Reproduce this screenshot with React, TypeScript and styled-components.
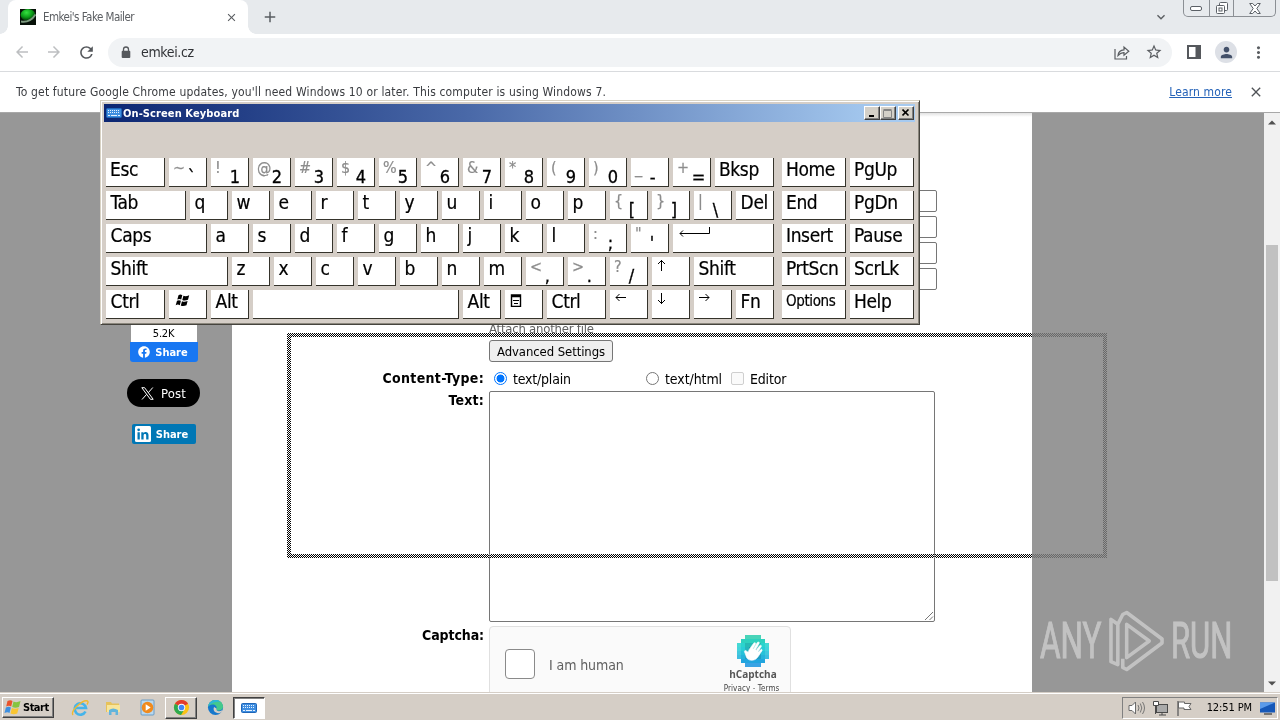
import React from 'react';
import styled, { createGlobalStyle, css } from 'styled-components';
import { MdArrowBack, MdArrowForward, MdRefresh, MdStarOutline, MdPerson, MdMoreVert, MdClose, MdAdd, MdKeyboardArrowDown } from 'react-icons/md';
import { FaFacebook } from 'react-icons/fa';

const Global = createGlobalStyle`
  * { box-sizing: border-box; }
  body { margin: 0; overflow: hidden; background: #fff; }
`;

const ui = `Tahoma, "DejaVu Sans Condensed", "DejaVu Sans", sans-serif`;

const Screen = styled.div`
  width: 1280px;
  height: 720px;
  display: flex;
  flex-direction: column;
  position: relative;
  overflow: hidden;
  font-family: ${ui};
  color: #000;
  svg { display: block; flex: none; }
`;

const Label = styled.span<{ $size: number; $track?: number; $color?: string; $bold?: boolean; $width?: number }>`
  font-size: ${(p) => p.$size}px;
  letter-spacing: ${(p) => p.$track ?? 0}px;
  color: ${(p) => p.$color ?? 'inherit'};
  font-weight: ${(p) => (p.$bold ? 700 : 400)};
  ${(p) => p.$width && css`width: ${p.$width}px;`}
  white-space: nowrap;
  flex: none;
`;

/* Browser frame */

const TabStrip = styled.header`
  height: 34px;
  flex: none;
  display: flex;
  background: #e7eaed;
`;

const Tab = styled.div`
  width: 240px;
  margin-left: 8px;
  height: 34px;
  background: #fff;
  border-radius: 8px 8px 0 0;
  display: flex;
  align-items: center;
  padding: 0 10px 0 12px;
  position: relative;
  &::before, &::after {
    content: "";
    position: absolute;
    bottom: 0;
    width: 8px;
    height: 8px;
  }
  &::before { left: -8px; background: radial-gradient(circle at 0 0, #e7eaed 7.5px, #fff 8px); }
  &::after { right: -8px; background: radial-gradient(circle at 100% 0, #e7eaed 7.5px, #fff 8px); }
`;

const TabTitle = styled(Label)`
  flex: 1;
  margin-left: 7px;
`;

const TabAction = styled.div<{ $left?: number; $right?: number }>`
  display: flex;
  align-items: center;
  color: #5a5d61;
  margin-left: ${(p) => p.$left ?? 0}px;
  margin-right: ${(p) => p.$right ?? 0}px;
`;

const Spacer = styled.div`
  flex: 1;
`;

const WindowControls = styled.div`
  width: 93px;
  height: 17px;
  margin-right: 4px;
  border: 1px solid #8b8f94;
  border-top: 0;
  border-radius: 0 0 5px 5px;
  display: flex;
`;

const WindowControl = styled.div<{ $width: number }>`
  width: ${(p) => p.$width}px;
  display: flex;
  align-items: center;
  justify-content: center;
  & + & { border-left: 1px solid #8b8f94; }
`;

const Toolbar = styled.div`
  height: 38px;
  flex: none;
  display: flex;
  align-items: center;
  background: #fff;
  border-bottom: 1px solid #d9dbde;
  padding: 0 0 1px 13px;
  color: #5a5d61;
`;

const NavButton = styled.div<{ $dim?: boolean }>`
  width: 32px;
  color: ${(p) => (p.$dim ? '#bdbfc1' : '#55585c')};
`;

const Omnibox = styled.div`
  width: 1064px;
  height: 29px;
  margin: 0 12px 0 -1px;
  border-radius: 15px;
  background: #f1f3f5;
  display: flex;
  align-items: center;
  padding: 0 9px 0 13px;
`;

const Address = styled(Label)`
  margin-left: 10px;
`;

const Avatar = styled.div`
  width: 22px;
  height: 22px;
  margin: 0 12px 0 13px;
  border-radius: 50%;
  background: #dde0e6;
  color: #44516a;
  display: flex;
  align-items: center;
  justify-content: center;
`;

const InfoBar = styled.div`
  height: 41px;
  flex: none;
  display: flex;
  align-items: center;
  padding: 0 16px;
  background: #fff;
  border-bottom: 1px solid #a8a8a8;
`;

const LearnMore = styled(Label)`
  text-decoration: underline;
  text-underline-offset: 1px;
  margin-right: 16px;
`;

/* Page */

const Viewport = styled.main`
  height: 579px;
  flex: none;
  display: flex;
  background: #979797;
  overflow: hidden;
`;

const ShareColumn = styled.aside`
  width: 73px;
  margin: 195px 32px 0 127px;
  display: flex;
  flex-direction: column;
  align-items: center;
`;

const ShareCount = styled.div`
  width: 66px;
  height: 34px;
  background: #fff;
  display: flex;
  justify-content: center;
  align-items: flex-end;
  padding-bottom: 2px;
`;

const ShareButton = styled.div<{ $w: number; $h: number; $bg: string; $radius: string; $top?: number; $gap: number; $pull?: number }>`
  width: ${(p) => p.$w}px;
  height: ${(p) => p.$h}px;
  margin-top: ${(p) => p.$top ?? 0}px;
  padding-right: ${(p) => p.$pull ?? 0}px;
  background: ${(p) => p.$bg};
  border-radius: ${(p) => p.$radius};
  color: #fff;
  display: flex;
  align-items: center;
  justify-content: center;
  gap: ${(p) => p.$gap}px;
`;

const Sheet = styled.section`
  width: 800px;
  background: linear-gradient(#e2e2e2, #fff 4px);
  padding: 77px 0 0;
  display: flex;
  flex-direction: column;
`;

const FormRow = styled.div<{ $height: number; $gap?: number }>`
  height: ${(p) => p.$height}px;
  flex: none;
  margin-bottom: ${(p) => p.$gap ?? 4}px;
  display: grid;
  grid-template-columns: 252px 1fr;
  column-gap: 5px;
`;

const FieldName = styled(Label)<{ $line?: number }>`
  justify-self: end;
  line-height: ${(p) => p.$line ?? 18}px;
`;

const TextInput = styled.div`
  grid-column: 2;
  width: 448px;
  height: 22px;
  border: 1px solid #767676;
  border-radius: 2px;
`;

const AttachLink = styled(Label)`
  grid-column: 2;
  line-height: 17px;
`;

const PushButton = styled.div`
  grid-column: 2;
  width: 124px;
  height: 22px;
  border: 1px solid #767676;
  border-radius: 3px;
  background: #efefef;
  display: flex;
  align-items: center;
  justify-content: center;
`;

const Options = styled.div`
  display: flex;
  align-items: center;
  padding-left: 5px;
`;

const OptionText = styled(Label)`
  padding-top: 2px;
`;

const Radio = styled.div<{ $on?: boolean }>`
  width: 13px;
  height: 13px;
  border-radius: 50%;
  border: 1px solid ${(p) => (p.$on ? '#0075ff' : '#767676')};
  margin-right: 6px;
  ${(p) => p.$on && css`background: radial-gradient(circle, #0075ff 0 3.6px, #fff 4.3px);`}
`;

const Check = styled.div`
  width: 13px;
  height: 13px;
  border: 1px solid #cfcfcf;
  border-radius: 2px;
  background: #fafafa;
  margin: 0 6px 0 9px;
`;

const TextArea = styled.div`
  width: 446px;
  height: 231px;
  border: 1px solid #767676;
  border-radius: 2px;
  display: flex;
  align-items: flex-end;
  justify-content: flex-end;
`;

const Captcha = styled.div`
  width: 302px;
  height: 76px;
  border: 1px solid #e0e0e0;
  border-radius: 4px;
  background: #fafafa;
  display: flex;
  align-items: center;
  padding: 0 7px 0 15px;
`;

const CaptchaBox = styled.div`
  width: 30px;
  height: 30px;
  border: 1px solid #8a8a8a;
  border-radius: 4px;
  background: #fff;
  margin-right: 14px;
`;

const CaptchaText = styled(Label)`
  padding-top: 2px;
`;

const CaptchaBrand = styled.div`
  align-self: stretch;
  width: 60px;
  padding-top: 8px;
  display: flex;
  flex-direction: column;
  align-items: center;
`;

const BrandName = styled(Label)`
  font-family: "Open Sans", sans-serif;
  line-height: 12px;
  margin-top: 1px;
`;

const BrandLinks = styled(Label)`
  line-height: 10px;
  margin: 4px 3px 0 0;
`;

const Scrollbar = styled.div`
  width: 16px;
  margin-left: auto;
  background: #f1f1f1;
  display: flex;
  flex-direction: column;
  align-items: center;
  justify-content: space-between;
  padding: 7px 0 6px;
`;

const Thumb = styled.div`
  width: 12px;
  height: 336px;
  margin-top: 19px;
  background: #c1c1c1;
`;

/* On-screen keyboard window */

const KeyboardWindow = styled.section`
  position: absolute;
  left: 100px;
  top: 100px;
  width: 820px;
  height: 225px;
  background: #d5cec7;
  border: 1px solid;
  border-color: #d8d2c4 #46443e #46443e #d8d2c4;
  box-shadow: inset 1px 1px #fff, inset -1px -1px #8b877d;
  padding: 3px 4px 0 3px;
`;

const TitleBar = styled.div`
  height: 18px;
  display: flex;
  align-items: center;
  padding: 0 1px 0 2px;
  background: linear-gradient(90deg, #0c2672, #4a69a8 45%, #a6caf0 96%);
`;

const TitleText = styled(Label)`
  flex: 1;
  margin-left: 1px;
`;

const CaptionButton = styled.div<{ $gap?: number }>`
  width: 16px;
  height: 14px;
  margin-left: ${(p) => p.$gap ?? 0}px;
  background: #d4d0c8;
  border: 1px solid;
  border-color: #fff #404040 #404040 #fff;
  box-shadow: inset -1px -1px #808080;
  display: flex;
  align-items: center;
  justify-content: center;
`;

const KeyArea = styled.div`
  display: flex;
  gap: 8px;
  padding: 36px 0 0 2px;
`;

const KeyBlock = styled.div<{ $width: number }>`
  width: ${(p) => p.$width}px;
  display: flex;
  flex-direction: column;
  gap: 4px;
`;

const KeyRow = styled.div`
  display: flex;
  gap: 4px;
`;

const Key = styled.div<{ $width: number }>`
  width: ${(p) => p.$width}px;
  height: 29px;
  flex: none;
  background: #fff;
  border-right: 1px solid #35332b;
  border-bottom: 1px solid #35332b;
  display: flex;
  align-items: flex-start;
  padding-left: 4px;
  overflow: hidden;
`;

const KeyText = styled(Label)<{ $indent?: number }>`
  line-height: 22px;
  padding-left: ${(p) => p.$indent ?? 0}px;
  -webkit-text-stroke: 0.2px #000;
`;

const ShiftGlyph = styled.span`
  width: 14px;
  flex: none;
  font-size: 16px;
  line-height: 20px;
  color: #8c8c8c;
  -webkit-text-stroke: 0.2px #8c8c8c;
`;

const BaseGlyph = styled.span`
  font-size: 18px;
  line-height: 24px;
  margin: 7px 0 0 0.7px;
  flex: none;
  -webkit-text-stroke: 0.3px #000;
`;

const KeyIcon = styled.div<{ $top: number; $left: number }>`
  padding: ${(p) => p.$top}px 0 0 ${(p) => p.$left}px;
`;

/* Inverted dotted outline that follows a dragged window */
const DragOutline = styled.div`
  position: absolute;
  left: 287px;
  top: 333px;
  width: 820px;
  height: 225px;
  padding: 4px;
  background: repeating-conic-gradient(#fff 0 25%, #000 0 50%) 0 0 / 2px 2px;
  mix-blend-mode: difference;
  mask: linear-gradient(#000 0 0) content-box exclude, linear-gradient(#000 0 0);
`;

const Watermark = styled.div`
  position: absolute;
  left: 1040px;
  top: 608px;
  width: 193px;
  height: 66px;
  display: flex;
  align-items: center;
  justify-content: space-between;
  opacity: 0.42;
  color: #fff;
`;

const WatermarkWord = styled.span<{ $scale: number; $width: number }>`
  width: ${(p) => p.$width}px;
  font: 400 50px/64px Roboto, sans-serif;
  transform: scaleX(${(p) => p.$scale});
  transform-origin: left;
  -webkit-text-stroke: 1px #fff;
`;

/* Taskbar */

const Taskbar = styled.footer`
  height: 28px;
  flex: none;
  background: #d5cec6;
  border-top: 1px solid #d5cec6;
  box-shadow: inset 0 1px #fff;
  display: flex;
  align-items: center;
  padding: 2px 2px 0;
`;

const StartButton = styled.div`
  width: 52px;
  height: 21px;
  border: 1px solid;
  border-color: #fff #404040 #404040 #fff;
  box-shadow: inset -1px -1px #808080;
  display: flex;
  align-items: center;
  gap: 1px;
  margin-right: 9px;
`;

const TaskItem = styled.div<{ $frame?: 'raised' | 'pressed' }>`
  width: 32px;
  height: 22px;
  margin: 0 0.9px;
  display: flex;
  align-items: center;
  justify-content: center;
  border: 1px solid transparent;
  ${(p) => p.$frame === 'raised' && css`border-color: #fff #404040 #404040 #fff; box-shadow: inset -1px -1px #808080;`}
  ${(p) => p.$frame === 'pressed' && css`border-color: #404040 #fff #fff #404040; background: #fff; box-shadow: inset 1px 1px #808080;`}
`;

const Tray = styled.div`
  width: 156px;
  height: 22px;
  border: 1px solid;
  border-color: #808080 #fff #fff #808080;
  display: flex;
  align-items: center;
  gap: 7px;
  padding: 0 2px 0 5px;
`;

type KeySpec = { t?: string; s?: string; w?: number; size?: number; icon?: React.ReactNode };

const arrowPaths: Record<string, string> = {
  left: 'M1 5.5h10M4.5 2 1 5.5 4.5 9',
  right: 'M0 5.5h10M6.5 2 10 5.5 6.5 9',
  up: 'M5.5 0v11M2 4 5.5 .5 9 4',
  down: 'M5.5 0v11M2 7 5.5 10.5 9 7',
};

const Arrow = ({ dir }: { dir: string }) => (
  <KeyIcon $top={dir === 'left' || dir === 'right' ? 2 : 3} $left={dir === 'up' || dir === 'down' ? 0 : 1}>
    <svg width="12" height="12" viewBox="0 0 12 12" fill="none" stroke="#000" strokeWidth="1"><path d={arrowPaths[dir]} /></svg>
  </KeyIcon>
);

const EnterIcon = () => (
  <KeyIcon $top={3} $left={2}>
    <svg width="32" height="12" viewBox="0 0 32 12" fill="none" stroke="#000"><path d="M30.5 0v6.500H1M4 3.500 1 6.500l3 3" /></svg>
  </KeyIcon>
);

const WinKeyIcon = () => (
  <KeyIcon $top={4} $left={2}>
    <svg width="15" height="13" viewBox="0 0 15 13" fill="#000">
      <path d="M3.500 1.200Q5.500 0 7.300 1.200L6.200 5.500Q4.300 4.500 2.300 5.600ZM8.400 1.700Q10.500 2.800 14.200 1.300L13 5.800Q9.600 7.200 7.300 6ZM2 6.700Q4 5.600 5.900 6.700L4.800 11.200Q2.800 10 .7 11.200ZM7 7.200Q9.300 8.400 12.600 7L11.500 11.300Q8 12.800 5.800 11.500Z" />
    </svg>
  </KeyIcon>
);

const MenuKeyIcon = () => (
  <KeyIcon $top={4} $left={1}>
    <svg width="12" height="13" viewBox="0 0 12 13" fill="none" stroke="#000"><path d="M1.500 1h9v11.500h-9zM1 2.500h10" strokeWidth="1.400" /><path d="M3 6.500h6M4 9.500h4" /></svg>
  </KeyIcon>
);

const letters = (s: string): KeySpec[] => s.split('').map((t) => ({ t }));
const pairs = (list: string[]): KeySpec[] => list.map((p) => ({ s: p[0], t: p[1] }));

const mainRows: KeySpec[][] = [
  [{ t: 'Esc', w: 59 }, ...pairs(['~`', '!1', '@2', '#3', '$4', '%5', '^6', '&7', '*8', '(9', ')0', '_-', '+=']), { t: 'Bksp', w: 59 }],
  [{ t: 'Tab', w: 80 }, ...letters('qwertyuiop'), ...pairs(['{[', '}]', '|\\']), { t: 'Del' }],
  [{ t: 'Caps', w: 101 }, ...letters('asdfghjkl'), ...pairs([':;', '"\'']), { icon: <EnterIcon />, w: 101 }],
  [{ t: 'Shift', w: 122 }, ...letters('zxcvbnm'), ...pairs(['<,', '>.', '?/']), { icon: <Arrow dir="up" /> }, { t: 'Shift', w: 80 }],
  [
    { t: 'Ctrl', w: 59 }, { icon: <WinKeyIcon /> }, { t: 'Alt' }, { w: 206 }, { t: 'Alt' }, { icon: <MenuKeyIcon /> }, { t: 'Ctrl', w: 59 },
    { icon: <Arrow dir="left" /> }, { icon: <Arrow dir="down" /> }, { icon: <Arrow dir="right" /> }, { t: 'Fn' },
  ],
];

const sideRows: KeySpec[][] = [
  [{ t: 'Home' }, { t: 'PgUp' }],
  [{ t: 'End' }, { t: 'PgDn' }],
  [{ t: 'Insert' }, { t: 'Pause' }],
  [{ t: 'PrtScn' }, { t: 'ScrLk' }],
  [{ t: 'Options', size: 15 }, { t: 'Help' }],
];

const Keys = ({ rows, width, unit, indent }: { rows: KeySpec[][]; width: number; unit: number; indent: number }) => (
  <KeyBlock $width={width}>
    {rows.map((row, r) => (
      <KeyRow key={r}>
        {row.map((k, i) => (
          <Key key={i} $width={k.w ?? unit}>
            {k.icon}
            {k.s && <ShiftGlyph>{k.s}</ShiftGlyph>}
            {k.s && <BaseGlyph>{k.t}</BaseGlyph>}
            {!k.s && k.t && <KeyText $size={k.size ?? 19} $track={-0.38} $indent={r > 0 ? indent : 0}>{k.t}</KeyText>}
          </Key>
        ))}
      </KeyRow>
    ))}
  </KeyBlock>
);

const KeyboardGlyph = ({ w = 16, h = 10 }: { w?: number; h?: number }) => (
  <svg width={w} height={h} viewBox="0 0 16 10">
    <rect x=".5" y=".5" width="15" height="9" rx="1" fill="#3f8ee0" stroke="#1f66b8" />
    <path d="M2 2.500h12M2 4.500h12" stroke="#e6f2ff" strokeDasharray="1 1" />
    <path d="M2 7.500h2M5 7.500h6M12 7.500h2" stroke="#e6f2ff" />
  </svg>
);

const FlagLogo = () => (
  <svg width="19" height="17" viewBox="0 0 18 17">
    <path d="M4 2Q7 .5 9 2L7.700 7.500Q5.500 6 2.700 7.500Z" fill="#e9532b" />
    <path d="M10 2.500Q13 4 17 2L15.500 8Q12 9.500 8.700 8Z" fill="#86c440" />
    <path d="M2.400 8.500Q5.400 7 7.400 8.500L6 14Q4 12.500 1 14Z" fill="#3d8fe0" />
    <path d="M8.400 9Q11.500 10.500 15.200 9L13.700 14.500Q10 16 7 14.500Z" fill="#f9c531" />
  </svg>
);

const captchaCells: Array<[number, number]> = [];
for (let y = 0; y < 8; y++) {
  for (let x = 0; x < 8; x++) {
    const dx = Math.min(x, 7 - x);
    const dy = Math.min(y, 7 - y);
    if (dx + dy >= 2) captchaCells.push([x, y]);
  }
}

const CaptchaLogo = () => (
  <svg width="32" height="32" viewBox="0 0 32 32">
    {captchaCells.map(([x, y]) => (
      <rect key={`${x}-${y}`} x={x * 4} y={y * 4} width="4" height="4" fill={`hsl(${168 + y * 5}, ${62 + y * 2}%, ${56 - Math.min(x, 7 - x, y, 7 - y) * 6}%)`} />
    ))}
    <path d="M8 18c-1.500-2 .3-3.500 1.700-1.800l1.500 1 1-2.700 4.500-6.300c1-1.200 2.500-.3 1.800 1l-2.700 4.500.5.300 4-6.500c.9-1.200 2.500-.3 1.800 1.100l-3.500 6.200.6.400 3.400-4.500c1-1.200 2.300-.2 1.600 1l-3.200 5 .4.300 2.200-2.300c1-.9 2.100.1 1.300 1.200-2 2.600-3.500 6.100-5.900 8-3.500 2.400-7.500 1.700-9.500-1.300Z" fill="#fff" stroke="#fff" strokeWidth=".6" />
  </svg>
);

export default function App() {
  return (
    <Screen>
      <Global />
      <TabStrip>
        <Tab>
          <svg width="16" height="16" viewBox="0 0 16 16">
            <defs><radialGradient id="orb" cx=".4" cy=".3" r=".65"><stop offset="0" stopColor="#35e040" /><stop offset=".6" stopColor="#0b9a18" /><stop offset="1" stopColor="#033c08" /></radialGradient></defs>
            <rect width="16" height="16" fill="#071008" />
            <ellipse cx="8" cy="6" rx="7.500" ry="6" fill="url(#orb)" />
            <path d="M1 12.500Q10 14 15.500 5.500" stroke="#7d9a80" strokeWidth="1.800" fill="none" />
          </svg>
          <TabTitle $size={11.5} $track={-0.53} $color="#5a5d61">Emkei's Fake Mailer</TabTitle>
          <MdClose size={13} color="#5a5d61" />
        </Tab>
        <TabAction $left={13}><MdAdd size={18} /></TabAction>
        <Spacer />
        <TabAction $right={14}><MdKeyboardArrowDown size={16} /></TabAction>
        <WindowControls>
          <WindowControl $width={25}><svg width="13" height="6" viewBox="0 0 13 6"><rect x=".5" y="1.500" width="11" height="4" rx="1.500" fill="#fff" stroke="#5b6066" /></svg></WindowControl>
          <WindowControl $width={25}><svg width="14" height="14" viewBox="0 0 14 14" fill="#fff" stroke="#5b6066"><rect x="4.500" y="1.500" width="8" height="8" rx="1" /><rect x="1.500" y="4.500" width="8" height="8" rx="1" /><rect x="4" y="7" width="3" height="3" /></svg></WindowControl>
          <WindowControl $width={42}><svg width="12" height="11" viewBox="0 0 12 11" fill="#fff" stroke="#5b6066"><path d="M.7.5h3L6 3 8.300.5h3L7.800 5.500l3.500 5h-3L6 8 3.700 10.500h-3l3.500-5Z" /></svg></WindowControl>
        </WindowControls>
      </TabStrip>
      <Toolbar>
        <NavButton $dim><MdArrowBack size={18} /></NavButton>
        <NavButton $dim><MdArrowForward size={18} /></NavButton>
        <NavButton><MdRefresh size={19} /></NavButton>
        <Omnibox>
          <svg width="10" height="13" viewBox="0 0 10 13"><path d="M2.500 6V3.500a2.500 2.500 0 0 1 5 0V6" fill="none" stroke="#55585c" strokeWidth="1.300" /><rect x=".7" y="4.800" width="8.600" height="7.200" rx="1" fill="#55585c" /></svg>
          <Address $size={14} $track={-0.35} $color="#303236">emkei.cz</Address>
          <Spacer />
          <svg width="16" height="15" viewBox="0 0 16 15" fill="none" stroke="#5a5d61" strokeWidth="1.200"><path d="M1 4v10h11.500v-3" /><path d="M4 10.500Q4.500 5 10 4.800V2l4.800 4.200L10 10.300V7.600Q6.500 7.500 4 10.500Z" /></svg>
          <TabAction $left={15}><MdStarOutline size={18} /></TabAction>
        </Omnibox>
        <svg width="18" height="16" viewBox="0 0 18 16"><rect x="4" y="2" width="12" height="12" fill="none" stroke="#55585c" strokeWidth="2" /><rect x="11.500" y="1" width="5.500" height="14" fill="#55585c" /></svg>
        <Avatar><MdPerson size={17} /></Avatar>
        <MdMoreVert size={19} />
      </Toolbar>
      <InfoBar>
        <Label $size={12} $track={0.16} $color="#3a3c40">To get future Google Chrome updates, you'll need Windows 10 or later. This computer is using Windows 7.</Label>
        <Spacer />
        <LearnMore $size={12} $track={0.13} $color="#2462b8">Learn more</LearnMore>
        <MdClose size={16} color="#505357" />
      </InfoBar>

      <Viewport>
        <ShareColumn>
          <ShareCount><Label $size={11} $track={-0.2}>5.2K</Label></ShareCount>
          <ShareButton $w={68} $h={20} $bg="#1877f2" $radius="0 0 3px 3px" $gap={5} $pull={1}>
            <FaFacebook size={12} />
            <Label $size={11} $bold>Share</Label>
          </ShareButton>
          <ShareButton $w={73} $h={28} $bg="#000" $radius="14px" $top={17} $gap={7}>
            <svg width="13" height="13" viewBox="0 0 13 13" fill="none" stroke="#fff"><path d="M.8.7h2.800l8.600 11.600H9.400ZM11.800.5 7.200 5.800M5.700 7.300 1 12.500" /></svg>
            <Label $size={13} $track={0.2}>Post</Label>
          </ShareButton>
          <ShareButton $w={64} $h={20} $bg="#0077b5" $radius="2px" $top={17} $gap={5} $pull={4}>
            <svg width="16" height="16" viewBox="0 0 16 16"><rect width="16" height="16" rx="1.500" fill="#fff" /><path d="M2.500 6.200h2.300v7.300H2.500zM6.300 6.200h2.200v1c1.200-1.900 5-1.700 5 1.800v4.500h-2.300V9.400c0-2-2.600-1.800-2.600 0v4.100H6.300z" fill="#0077b5" /><circle cx="3.650" cy="3.800" r="1.350" fill="#0077b5" /></svg>
            <Label $size={11} $bold>Share</Label>
          </ShareButton>
        </ShareColumn>

        <Sheet>
          {[4, 4, 4, 30].map((gap, i) => (
            <FormRow key={i} $height={22} $gap={gap}><TextInput /></FormRow>
          ))}
          <FormRow $height={17} $gap={3}><AttachLink $size={13} $track={-0.22} $color="#606060">Attach another file</AttachLink></FormRow>
          <FormRow $height={22} $gap={4}><PushButton><Label $size={13} $track={-0.08}>Advanced Settings</Label></PushButton></FormRow>
          <FormRow $height={23} $gap={2}>
            <FieldName $size={14} $track={0.32} $line={24} $bold>Content-Type:</FieldName>
            <Options>
              <Radio $on /><OptionText $size={14} $track={-0.2} $width={133}>text/plain</OptionText>
              <Radio /><OptionText $size={14} $track={-0.08}>text/html</OptionText>
              <Check /><OptionText $size={14} $track={-0.2}>Editor</OptionText>
            </Options>
          </FormRow>
          <FormRow $height={231}>
            <FieldName $size={14} $track={0.2} $bold>Text:</FieldName>
            <TextArea><svg width="10" height="10" viewBox="0 0 10 10" stroke="#777"><path d="M1 9 9 1M5.500 9 9 5.500" /></svg></TextArea>
          </FormRow>
          <FormRow $height={76}>
            <FieldName $size={14} $track={-0.1} $bold>Captcha:</FieldName>
            <Captcha>
              <CaptchaBox />
              <CaptchaText $size={14} $track={-0.1} $color="#606060">I am human</CaptchaText>
              <Spacer />
              <CaptchaBrand>
                <CaptchaLogo />
                <BrandName $size={10} $bold $color="#555">hCaptcha</BrandName>
                <BrandLinks $size={8} $track={0.1} $color="#444">Privacy - Terms</BrandLinks>
              </CaptchaBrand>
            </Captcha>
          </FormRow>
        </Sheet>

        <Scrollbar>
          <svg width="8" height="5" viewBox="0 0 8 5"><path d="M0 4.500 4 .5l4 4Z" fill="#505050" /></svg>
          <Thumb />
          <svg width="8" height="5" viewBox="0 0 8 5"><path d="M0 .5h8l-4 4Z" fill="#505050" /></svg>
        </Scrollbar>
      </Viewport>

      <Taskbar>
        <StartButton>
          <FlagLogo />
          <Label $size={11} $bold $track={-0.5}>Start</Label>
        </StartButton>
        <TaskItem>
          <svg width="18" height="18" viewBox="0 0 18 18" fill="none"><path d="M14.500 12.500A5.700 5.700 0 1 1 15 9H4.500" stroke="#45b4ea" strokeWidth="2.600" /><path d="M2 16C-1 12 12 0 16.500 2c1 .6.500 2-.5 3.500" stroke="#f0b92e" strokeWidth="1.400" /></svg>
        </TaskItem>
        <TaskItem>
          <svg width="17" height="17" viewBox="0 0 17 17"><path d="M1 3h5l1 1.500h7V13H1z" fill="#e7c25a" /><path d="M2 6h13v7H2z" fill="#f8e59b" /><path d="M4 16v-5q4-3 9 0v5h-2.500v-3h-4v3z" fill="#62b5dc" /></svg>
        </TaskItem>
        <TaskItem>
          <svg width="17" height="17" viewBox="0 0 17 17"><rect x="2" y="1" width="13" height="15" rx="1" fill="#b9d8ef" stroke="#6a9cc4" /><circle cx="8.500" cy="8.500" r="5.800" fill="#f08a1d" /><path d="M6.700 5.300v6.400l5-3.200z" fill="#fff" /></svg>
        </TaskItem>
        <TaskItem $frame="raised">
          <svg width="17" height="17" viewBox="0 0 18 18"><circle cx="9" cy="9" r="8" fill="#fbc116" /><path d="M9 9 2.070 5A8 8 0 0 1 15.930 5Z" fill="#e33b2e" /><path d="M9 9 2.070 5A8 8 0 0 0 8.500 17L12 11Z" fill="#2da94f" /><circle cx="9" cy="9" r="3.900" fill="#fff" /><circle cx="9" cy="9" r="3" fill="#4285f4" /></svg>
        </TaskItem>
        <TaskItem>
          <svg width="17" height="17" viewBox="0 0 18 18"><circle cx="9" cy="9" r="8" fill="#1678cc" /><path d="M1.300 8C2 3 5.500 1 9 1c5 0 8 3.500 8 7 0 3-2.500 4.300-5 4.300-2 0-2.500-1-2-2 1-3-2-5-4.500-4.500C3.500 6.100 2 7 1.300 8Z" fill="#44c98c" /><path d="M1.300 8C2 3.500 5.500 1 9 1c2 0 4 .6 5.500 2-4-.5-10 .5-13.200 5Z" fill="#2eb5d8" /><path d="M7.500 8.500c-1.500 3 .5 6.500 5 6.500l3-1a5.500 5.500 0 0 0 .5-2c-4 2-6.500.5-6-2Z" fill="#d5cec6" /></svg>
        </TaskItem>
        <TaskItem $frame="pressed"><KeyboardGlyph w={16} h={10} /></TaskItem>
        <Spacer />
        <Tray>
          <svg width="17" height="16" viewBox="0 0 17 16" fill="none" stroke="#6b6b6b"><path d="M1 5.500h3l3.500-3.500v12L4 10.500H1z" fill="#fff" /><path d="M10 5q2 3 0 6M12.300 3.500q3 4.500 0 9M14.500 2q4 6 0 12" strokeWidth=".9" /></svg>
          <svg width="17" height="16" viewBox="0 0 17 16" fill="none" stroke="#4a4a4a"><rect x="4.500" y="4.500" width="11" height="8" fill="#aaa" /><path d="M7 15h7M10 12.500V15" /><path d="M1.500 1.500h5v4h-5zM3.500 5.500V14" fill="#fff" /></svg>
          <svg width="16" height="16" viewBox="0 0 16 16" stroke="#666"><path d="M2 1v15" strokeWidth="1.400" /><path d="M2.500 2h6v1.500H15l-2 3 2 3H8V8H2.500z" fill="#fff" /></svg>
          <Spacer />
          <Label $size={11} $track={-0.1}>12:51 PM</Label>
          <svg width="16" height="16" viewBox="0 0 16 16"><path d="M1 2.500h15v10H1z" fill="#1658b8" /><path d="M1 2.500h15L1 9z" fill="#5b9bea" /><path d="M5 14h8" stroke="#555" strokeWidth="1.500" /></svg>
        </Tray>
      </Taskbar>

      <Watermark>
        <WatermarkWord $width={62} $scale={0.63}>ANY</WatermarkWord>
        <svg width="55" height="64" viewBox="0 0 56 64" fill="none" stroke="#fff" strokeWidth="3.600" strokeLinejoin="round"><path d="M2 10v43l7 3V15ZM9 15l5-10 4-2 36 27v4L18 61l-4-2V50M18 15l23 17-23 17Z" /></svg>
        <WatermarkWord $width={62} $scale={0.62}>RUN</WatermarkWord>
      </Watermark>

      <KeyboardWindow>
        <TitleBar>
          <KeyboardGlyph />
          <TitleText $size={11} $track={0.1} $bold $color="#fff">On-Screen Keyboard</TitleText>
          <CaptionButton><svg width="8" height="8" viewBox="0 0 8 8"><path d="M1 7h5" stroke="#000" strokeWidth="2" /></svg></CaptionButton>
          <CaptionButton><svg width="10" height="9" viewBox="0 0 10 9"><path d="M.5 1.500h8v7h-8zM.5.500h8" fill="none" stroke="#858585" /></svg></CaptionButton>
          <CaptionButton $gap={2}><svg width="8" height="8" viewBox="0 0 8 8"><path d="m.5.5 6 6m0-6-6 6" stroke="#000" strokeWidth="1.600" /></svg></CaptionButton>
        </TitleBar>
        <KeyArea>
          <Keys rows={mainRows} width={668} unit={38} indent={0.6} />
          <Keys rows={sideRows} width={132} unit={64} indent={0} />
        </KeyArea>
      </KeyboardWindow>
      <DragOutline />
    </Screen>
  );
}
